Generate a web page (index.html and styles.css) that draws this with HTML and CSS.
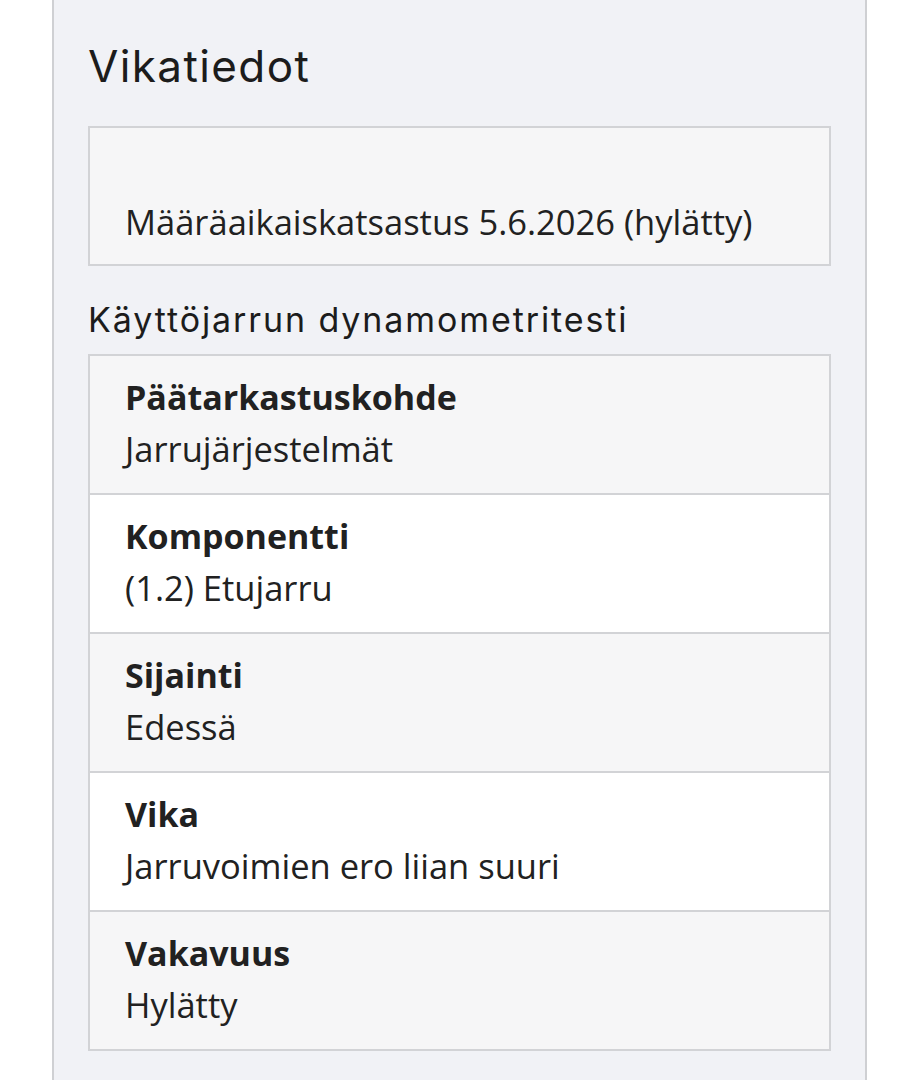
FILE: index.html
```html
<!DOCTYPE html>
<html>
<head>
    <title>Vikatiedot</title>
    <meta charset="UTF-8">
    <meta name="viewport" content="width=device-width, initial-scale=1.0">
    <link rel="stylesheet" href="styles.css">
</head>
<body>
    <div class="panel">
        <h1>Vikatiedot</h1>

        <div class="inspection-box">
            <p class="inspection-title"></p>
            <p>Määräaikaiskatsastus 5.6.2026 (hylätty)</p>
        </div>

        <h2>Käyttöjarrun dynamometritesti</h2>
        <div class="fault-table">
            <div class="fault-row">
                <div class="fault-label">Päätarkastuskohde</div>
                <div class="fault-value">Jarrujärjestelmät</div>
            </div>
            <div class="fault-row">
                <div class="fault-label">Komponentti</div>
                <div class="fault-value">(1.2) Etujarru</div>
            </div>
            <div class="fault-row">
                <div class="fault-label">Sijainti</div>
                <div class="fault-value">Edessä</div>
            </div>
            <div class="fault-row">
                <div class="fault-label">Vika</div>
                <div class="fault-value">Jarruvoimien ero liian suuri</div>
            </div>
            <div class="fault-row">
                <div class="fault-label">Vakavuus</div>
                <div class="fault-value">Hylätty</div>
            </div>
        </div>
    </div>
</body>
</html>
```

FILE: styles.css
```css
body, html {
    margin: 0;
    padding: 0;
    box-sizing: border-box;
}

*, *:before, *:after {
    box-sizing: inherit;
}

body {
    font-family: "Open Sans", "Noto Sans", sans-serif;
    background-color: #fff;
    color: #212121;
    font-size: 34.5px;
    line-height: 51px;
}

.panel {
    margin-left: 52px;
    width: 815px;
    min-height: 1080px;
    background-color: #f1f2f6;
    border-left: 2px solid #cfd0d3;
    border-right: 2px solid #cfd0d3;
    padding: 36px 34px 40px 34px;
}

h1, h2 {
    font-family: Inter, "Noto Sans", sans-serif;
    font-weight: 400;
    margin: 0;
    color: #1c1c1c;
}

h1 {
    font-size: 44px;
    line-height: 60px;
    letter-spacing: 1.4px;
    margin-bottom: 30px;
}

h2 {
    font-size: 34px;
    line-height: 44px;
    letter-spacing: 1.9px;
    margin-top: 32px;
    margin-bottom: 12px;
}

.inspection-box {
    background-color: #f6f6f7;
    border: 2px solid #d2d3d6;
    padding: 17px 35px 17px 35px;
}

.inspection-box p {
    margin: 0;
    min-height: 51px;
}

.fault-table {
    border: 2px solid #d2d3d6;
}

.fault-row {
    padding: 16px 35px 19px 35px;
    border-top: 2px solid #d2d3d6;
    background-color: #fff;
}

.fault-row:first-child {
    border-top: none;
}

.fault-row:nth-child(odd) {
    background-color: #f6f6f7;
}

.fault-label {
    font-weight: 700;
    font-size: 34px;
}
```
